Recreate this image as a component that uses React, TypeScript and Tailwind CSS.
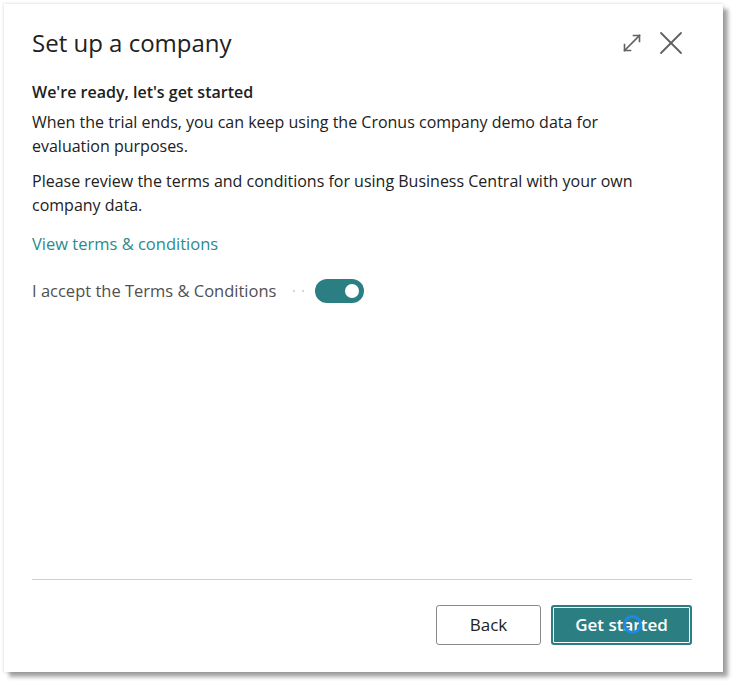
import { useState } from "react";

function ExpandIcon() {
  return (
    <svg width="22" height="22" viewBox="0 0 22 22" fill="none" stroke="#616161" strokeWidth="1.6" strokeLinecap="square">
      <path d="M3.5 18.5 L18.5 3.5" />
      <path d="M12.5 3.5 H18.5 V9.5" />
      <path d="M3.5 12.5 V18.5 H9.5" />
    </svg>
  );
}

function CloseIcon() {
  return (
    <svg width="24" height="24" viewBox="0 0 24 24" fill="none" stroke="#616161" strokeWidth="1.8" strokeLinecap="round">
      <path d="M2 2 L22 22" />
      <path d="M22 2 L2 22" />
    </svg>
  );
}

export default function App() {
  const [accepted, setAccepted] = useState(true);

  return (
    <div className="relative w-[733px] h-[681px] bg-white font-['Open_Sans',sans-serif] text-[#212121]">
      <div className="ml-[4px] pt-[4px]">
        <div className="flex flex-col w-[719px] h-[668px] bg-white shadow-[0_0_3px_rgba(0,0,0,0.18),5px_5px_4px_rgba(0,0,0,0.35)] px-[28px]">
          <div className="flex items-center justify-between pt-[23px]">
            <h1 className="text-[24px] leading-[32px] text-[#212121]">Set up a company</h1>
            <div className="flex items-center gap-[16px] pr-[12px]">
              <ExpandIcon />
              <CloseIcon />
            </div>
          </div>

          <h2 className="mt-[21px] text-[16px] leading-[24px] font-semibold">We're ready, let's get started</h2>
          <p className="mt-[6px] max-w-[640px] text-[16px] leading-[24px]">
            When the trial ends, you can keep using the Cronus company demo data for evaluation purposes.
          </p>
          <p className="mt-[11px] max-w-[640px] text-[16px] leading-[24px]">
            Please review the terms and conditions for using Business Central with your own company data.
          </p>
          <a className="mt-[15px] text-[16.5px] leading-[24px] text-[#2a8a8f] w-fit" href="#">
            View terms &amp; conditions
          </a>

          <div className="mt-[23px] flex items-center">
            <span className="w-[246px] text-[16.5px] leading-[24px] text-[#505050] whitespace-nowrap">I accept the Terms &amp; Conditions</span>
            <span className="ml-[15px] flex gap-[7px]">
              <span className="w-[2px] h-[2px] rounded-full bg-[#c8c8c8]" />
              <span className="w-[2px] h-[2px] rounded-full bg-[#c8c8c8]" />
            </span>
            <button
              onClick={() => setAccepted(!accepted)}
              className={`ml-[11px] w-[49px] h-[24px] rounded-full flex items-center px-[5px] ${accepted ? "bg-[#2b7f83] justify-end" : "bg-white border border-[#616161] justify-start"}`}
            >
              <span className={`w-[14px] h-[14px] rounded-full ${accepted ? "bg-white" : "bg-[#616161]"}`} />
            </button>
          </div>

          <div className="mt-auto border-t border-[#cfcfcf] mr-[3px]" />
          <div className="flex justify-end gap-[10px] pt-[25px] pb-[27px] pr-[3px]">
            <button className="w-[105px] h-[40px] border border-[#8a8a8a] rounded-[3px] bg-white text-[17px] text-[#212121]">
              Back
            </button>
            <button className="relative w-[141px] h-[40px] rounded-[3px] bg-[#2b7f83] text-[17px] font-semibold text-white outline outline-[1px] outline-white -outline-offset-[3px]">
              Get started
              <span className="absolute left-[72px] top-[10px] w-[19px] h-[19px] rounded-full border-[3.5px] border-[#1e88e5]" />
            </button>
          </div>
        </div>
      </div>
    </div>
  );
}
